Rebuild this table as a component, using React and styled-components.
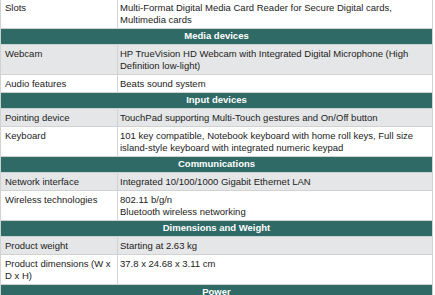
import React from "react";
import styled, { createGlobalStyle } from "styled-components";

const Global = createGlobalStyle`
  html, body { margin: 0; padding: 0; background: #ffffff; }
  body { font-family: "Liberation Sans", Arial, sans-serif; overflow: hidden; }
`;

const Table = styled.table`
  border-collapse: collapse;
  width: 433px;
  margin-top: -2px;
  font-size: 9.5px;
  line-height: 12px;
  color: #222;
  table-layout: fixed;
`;

const Section = styled.th`
  background: #2f6a66;
  color: #ffffff;
  font-weight: bold;
  text-align: center;
  padding: 1px 3px 2px;
  border: 1px solid #c9d3d2;
`;

const Row = styled.tr`
  background: ${(p) => (p.$shade ? "#e5e6e7" : "#ffffff")};
`;

const Label = styled.td`
  width: 110px;
  padding: 3px 3px 2px 4px;
  vertical-align: top;
  border: 1px solid #d2d2d2;
`;

const Value = styled.td`
  padding: 3px 3px 2px 2px;
  vertical-align: top;
  border: 1px solid #d2d2d2;
`;

const data = [
  { rows: [["Slots", ["Multi-Format Digital Media Card Reader for Secure Digital cards, Multimedia cards"]]] },
  {
    title: "Media devices",
    rows: [
      ["Webcam", ["HP TrueVision HD Webcam with Integrated Digital Microphone (High Definition low-light)"]],
      ["Audio features", ["Beats sound system"]],
    ],
  },
  {
    title: "Input devices",
    rows: [
      ["Pointing device", ["TouchPad supporting Multi-Touch gestures and On/Off button"]],
      ["Keyboard", ["101 key compatible, Notebook keyboard with home roll keys, Full size island-style keyboard with integrated numeric keypad"]],
    ],
  },
  {
    title: "Communications",
    rows: [
      ["Network interface", ["Integrated 10/100/1000 Gigabit Ethernet LAN"]],
      ["Wireless technologies", ["802.11 b/g/n", "Bluetooth wireless networking"]],
    ],
  },
  {
    title: "Dimensions and Weight",
    rows: [
      ["Product weight", ["Starting at 2.63 kg"]],
      ["Product dimensions (W x D x H)", ["37.8 x 24.68 x 3.11 cm"]],
    ],
  },
  { title: "Power", rows: [] },
];

export default function App() {
  return (
    <>
      <Global />
      <Table>
        <colgroup>
          <col style={{ width: 117 }} />
          <col />
        </colgroup>
        <tbody>
          {data.map((sec, si) => (
            <React.Fragment key={si}>
              {sec.title && (
                <tr>
                  <Section colSpan={2}>{sec.title}</Section>
                </tr>
              )}
              {sec.rows.map(([label, lines], ri) => (
                <Row key={ri} $shade={ri % 2 === 0 && sec.title}>
                  <Label>{label}</Label>
                  <Value>
                    {lines.map((l, li) => (
                      <React.Fragment key={li}>
                        {li > 0 && <br />}
                        {l}
                      </React.Fragment>
                    ))}
                  </Value>
                </Row>
              ))}
            </React.Fragment>
          ))}
        </tbody>
      </Table>
    </>
  );
}
